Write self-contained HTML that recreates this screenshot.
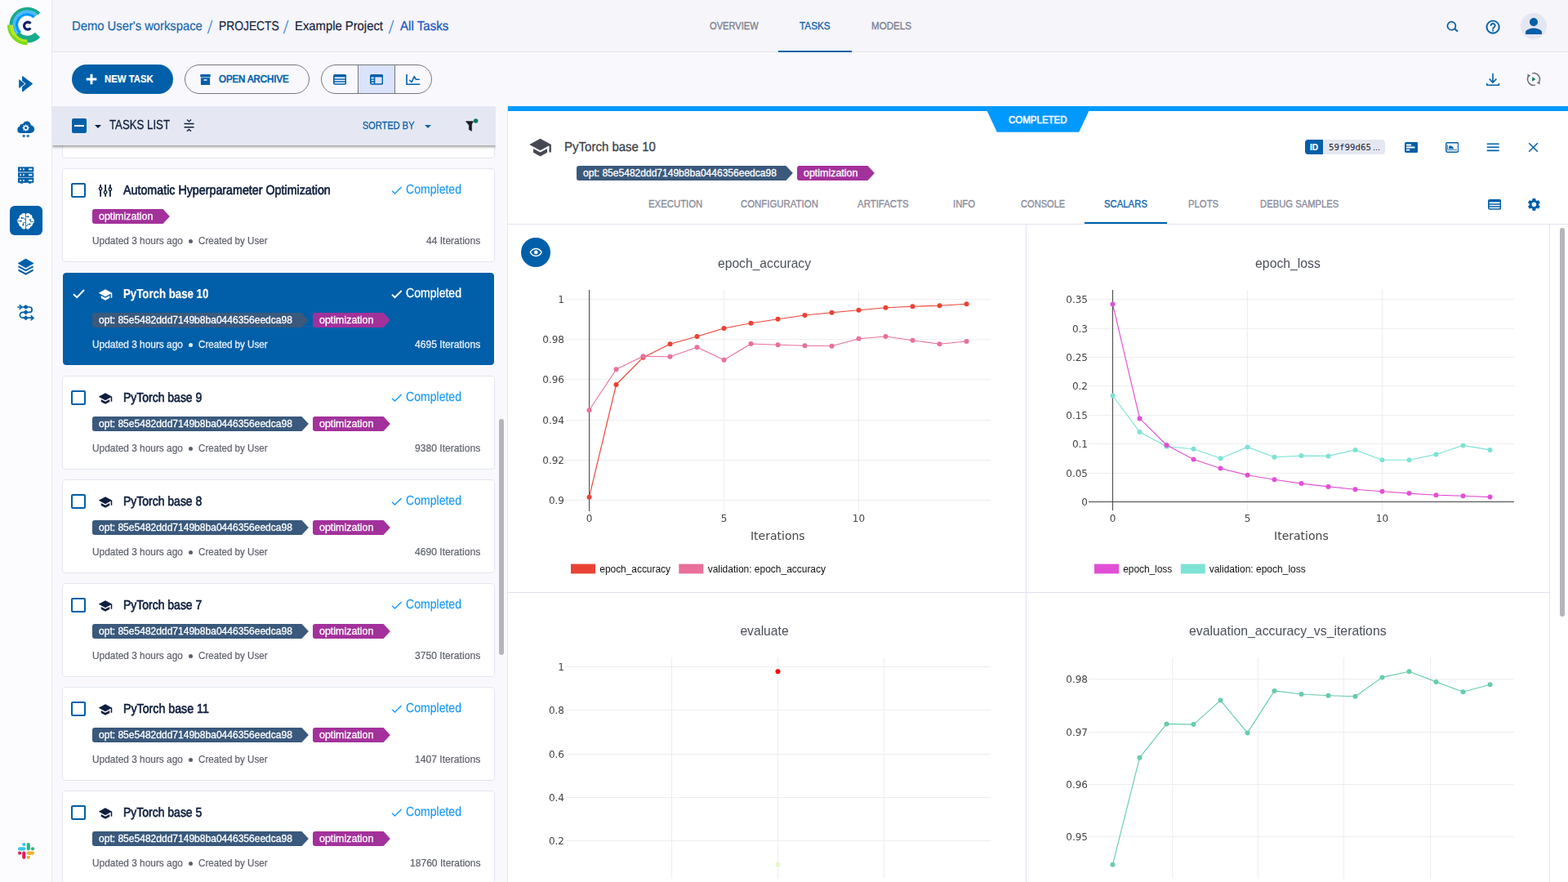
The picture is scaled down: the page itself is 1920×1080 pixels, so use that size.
<!DOCTYPE html>
<html lang="en"><head><meta charset="utf-8"><title>ClearML - Example Project - Tasks</title><style>
*{box-sizing:border-box;margin:0;padding:0}
html,body{width:1920px;height:1080px;overflow:hidden}
body{position:relative;background:#f9f9fd;font-family:"Liberation Sans",sans-serif;color:#0e1e3d}
.abs,.t,svg.i{position:absolute}
.t{white-space:nowrap;line-height:1;font-weight:400;transform-origin:0 50%;-webkit-text-stroke:.18px currentColor}
.m{-webkit-text-stroke:.3px currentColor}
.sb{-webkit-text-stroke:.65px currentColor}
.b{font-weight:700}
.sidebar{position:absolute;left:0;top:0;width:64px;height:1080px;background:#fcfcfe;border-right:1px solid #e6e8f2}
.topbar{position:absolute;left:64px;top:0;width:1856px;height:64px;background:#f5f5fa;border-bottom:1px solid #e3e5ef}
.navline{position:absolute;left:889px;top:62px;width:90px;height:2px;background:#005fa8}
.btn{position:absolute;top:79px;height:36px;border-radius:18px}
.btn.primary{left:88px;width:124px;background:#005fa8}
.btn.outline{left:226px;width:153px;border:1px solid #74777f}
.toggle{position:absolute;left:393px;top:79px;width:136px;height:36px;border-radius:18px;border:1px solid #74777f;overflow:hidden}
.toggle i{position:absolute;top:0;height:34px;display:block}
.list{position:absolute;left:64px;top:130px;width:558px;height:950px;border-right:1px solid #e3e5ef;overflow:hidden}
.lhwrap{position:absolute;left:0;top:0;width:543px;height:58px;overflow:hidden;z-index:3}
.listhead{position:absolute;left:0;top:0;width:543px;height:48px;background:#e5e8f2;box-shadow:0 2px 3px rgba(0,0,0,.38)}
.card{position:absolute;left:12px;width:530px;height:115px;background:#fff;border:1px solid #e3e6f0;border-radius:4px}
.card.sel{background:#005fa8;border-color:rgba(255,255,255,.55);background-clip:padding-box;border-radius:5px}
.cb{position:absolute;left:10px;top:17px;width:18px;height:18px;border:2px solid #005fa8;border-radius:2px;background:#fff}
.tag{position:absolute;height:18px;top:49px}
.tag b{position:absolute;left:0;top:0;height:18px;border-radius:3px 0 0 3px;display:block}
.thumb{position:absolute;background:#b5b5bb;border-radius:3px}
.detail{position:absolute;left:622px;top:130px;width:1298px;height:950px;background:#fff;overflow:hidden}
.detail .bar{position:absolute;left:0;top:0;width:1298px;height:6px;background:#0099ff}
.card,figure svg,.listhead{will-change:transform}
.hl{position:absolute;height:1px;background:#e1e3ee}
.vl{position:absolute;width:1px;background:#e1e3ee}
.idb{position:absolute;left:976px;top:41px;width:98px;height:18px;border-radius:4px;background:#e4e7f1;overflow:hidden}
.idb b{position:absolute;left:0;top:0;width:22px;height:18px;background:#005fa8;display:block}
.eye{position:absolute;left:16px;top:161px;width:36px;height:36px;border-radius:18px;background:#005fa8}
.tabline{position:absolute;left:706px;top:142px;width:101px;height:2px;background:#005fa8}
</style></head><body><aside class="sidebar"><svg class="i" style="left:0px;top:0px" width="64" height="64" viewBox="0 0 64 64"><path d="M13.61 31.29A19.9 19.9 0 0 1 47.81 16.78" fill="none" stroke="#16ab8b" stroke-width="4"></path><path d="M46.02 42.69A17.4 17.4 0 0 1 20.17 41.78" fill="none" stroke="#16ab8b" stroke-width="8.6"></path><path d="M21.01 41.08A16.3 16.3 0 0 1 44.82 18.87" fill="none" stroke="#4db8ff" stroke-width="3.4"></path><path d="M24.87 40.19A12.9 12.9 0 0 1 41.96 20.86" fill="none" stroke="#0099ff" stroke-width="3.4"></path><path d="M33.50 50.30A19.7 19.7 0 0 1 13.80 30.60" fill="none" stroke="#b2ea19" stroke-width="3.4"></path><path d="M33.50 53.60A23 23 0 0 1 10.50 30.60" fill="none" stroke="#7ddb1c" stroke-width="3.3"></path><path d="M37.45 34.49A4.5 4.5 0 1 1 37.45 28.71" fill="none" stroke="#0b1f6e" stroke-width="3.1"></path></svg><svg class="i" style="left:16px;top:86px" width="32" height="32" viewBox="16 86 32 32"><path d="M27.5 93.4L39.7 102.6L27.5 112.2Z" fill="#005fa8" stroke="#005fa8" stroke-width="0.9" stroke-linejoin="round"></path><path d="M23.6 97.7L30 102.6L23.6 107.5Z" fill="#005fa8" stroke="#fcfcfe" stroke-width="2.3" stroke-linejoin="round"></path><path d="M23.6 97.7L30 102.6L23.6 107.5Z" fill="#005fa8" stroke="#005fa8" stroke-width="0.8" stroke-linejoin="round"></path></svg><svg class="i" style="left:16px;top:142px" width="32" height="32" viewBox="16 142 32 32"><g fill="#005fa8"><circle cx="25.4" cy="158.9" r="4.1"></circle><circle cx="27.5" cy="155" r="3.3"></circle><circle cx="32.8" cy="153.7" r="5.1"></circle><circle cx="37.2" cy="158.1" r="4.9"></circle><rect x="25.4" y="156" width="11.8" height="7"></rect></g><polygon points="31.60,152.10 32.71,153.92 34.78,153.42 34.28,155.49 36.10,156.60 34.28,157.71 34.78,159.78 32.71,159.28 31.60,161.10 30.49,159.28 28.42,159.78 28.92,157.71 27.10,156.60 28.92,155.49 28.42,153.42 30.49,153.92" fill="#fff"></polygon><circle cx="31.6" cy="156.6" r="1.6" fill="#005fa8"></circle><path d="M29.2 164.2L30.0 165.7L31.5 166.5L30.0 167.3L29.2 168.8L28.4 167.3L26.9 166.5L28.4 165.7Z" fill="#005fa8"></path><path d="M34.2 164.2L35.0 165.7L36.5 166.5L35.0 167.3L34.2 168.8L33.400000000000006 167.3L31.900000000000002 166.5L33.400000000000006 165.7Z" fill="#005fa8"></path></svg><svg class="i" style="left:16px;top:198px" width="32" height="32" viewBox="16 198 32 32"><rect x="22" y="204.6" width="19.2" height="19.2" rx="0.8" fill="#7ea7cc"></rect><rect x="22" y="204.6" width="19.2" height="5.4" rx="0.6" fill="#005fa8"></rect><rect x="24.3" y="206.39999999999998" width="1.8" height="1.8" fill="#fff"></rect><rect x="28" y="206.39999999999998" width="1.8" height="1.8" fill="#fff"></rect><rect x="35" y="206.39999999999998" width="4.4" height="1.8" fill="#fff"></rect><rect x="22" y="211.7" width="19.2" height="5" rx="0.6" fill="#005fa8"></rect><rect x="24.3" y="213.29999999999998" width="1.8" height="1.8" fill="#fff"></rect><rect x="28" y="213.29999999999998" width="1.8" height="1.8" fill="#fff"></rect><rect x="35" y="213.29999999999998" width="4.4" height="1.8" fill="#fff"></rect><rect x="22" y="218" width="19.2" height="5.8" rx="0.6" fill="#005fa8"></rect><rect x="24.3" y="220.0" width="1.8" height="1.8" fill="#fff"></rect><rect x="28" y="220.0" width="1.8" height="1.8" fill="#fff"></rect><rect x="35" y="220.0" width="4.4" height="1.8" fill="#fff"></rect><rect x="25" y="223.4" width="3.2" height="1.4" rx="0.5" fill="#005fa8"></rect><rect x="35" y="223.4" width="3.2" height="1.4" rx="0.5" fill="#005fa8"></rect></svg><div class="abs" style="left:12px;top:252px;width:40px;height:36px;border-radius:6px;background:#005fa8"></div><svg class="i" style="left:16px;top:254px" width="32" height="32" viewBox="16 254 32 32"><path d="M31.2 262.2C30.3 260.8 27.4 260.6 26.5 262.6C24.5 262.9 23.4 264.6 23.8 266.4C22.1 267.4 20.9 269.3 21.3 270.6C21.1 272 21.9 273.4 23.2 274C23 276 24.3 277.4 25.9 277.7C26.4 279.8 28.3 280.9 30 280.5C30.6 280.4 31.2 279.9 31.2 279.2Z" fill="#fff"></path><path d="M32 262.2C32.9 260.8 35.8 260.6 36.7 262.6C38.7 262.9 39.8 264.6 39.4 266.4C41.1 267.4 42.3 269.3 41.9 270.6C42.1 272 41.3 273.4 40 274C40.2 276 38.9 277.4 37.3 277.7C36.8 279.8 34.9 280.9 33.2 280.5C32.6 280.4 32 279.9 32 279.2Z" fill="#fff"></path><g fill="none" stroke="#005fa8" stroke-width="0.8"><path d="M26.6 266.9H29.2L30 268.6H31.2"></path><path d="M21.6 270.7H25.5"></path><path d="M31.2 272.6H28.6L28.2 275.2"></path><path d="M32 265.3H34.2"></path><path d="M37.2 269.4V271.6H41"></path><path d="M32 276.6H33.3L33.9 274.5H36.2"></path></g><circle cx="26.7" cy="266.9" r="1.05" fill="#005fa8"></circle><circle cx="25.6" cy="270.7" r="1.05" fill="#005fa8"></circle><circle cx="28.3" cy="275.4" r="1.05" fill="#005fa8"></circle><circle cx="34.5" cy="265.2" r="1.05" fill="#005fa8"></circle><circle cx="37.1" cy="269.3" r="1.05" fill="#005fa8"></circle><circle cx="36.5" cy="274.5" r="1.05" fill="#005fa8"></circle></svg><svg class="i" style="left:16px;top:311px" width="32" height="32" viewBox="16 311 32 32"><path d="M31.6 316.9L41.2 322.5L31.6 327.9L22 322.5Z" fill="#005fa8" stroke="#005fa8" stroke-width="0.6" stroke-linejoin="round"></path><path d="M23.3 326.6L31.6 331.2L39.9 326.6" fill="none" stroke="#005fa8" stroke-width="2.1" stroke-linecap="round" stroke-linejoin="round"></path><path d="M23.3 331L31.6 335.6L39.9 331" fill="none" stroke="#005fa8" stroke-width="2.1" stroke-linecap="round" stroke-linejoin="round"></path></svg><svg class="i" style="left:16px;top:367px" width="32" height="32" viewBox="16 367 32 32"><path d="M22 376H36A3.2 3.2 0 0 1 36 382.4H27.8A3.3 3.3 0 0 0 27.8 389.2H40.5" fill="none" stroke="#005fa8" stroke-width="1.7" stroke-linecap="round"></path><path d="M24.2 373.6L26.8 376L24.2 378.4" fill="none" stroke="#005fa8" stroke-width="1.5" stroke-linecap="round" stroke-linejoin="round"></path><path d="M38.2 386.9L40.9 389.3L38.2 391.7" fill="none" stroke="#005fa8" stroke-width="1.7" stroke-linecap="round" stroke-linejoin="round"></path><circle cx="31.6" cy="376" r="2.4" fill="#005fa8"></circle><path d="M31.6 379.6L34.4 382.4L31.6 385.2L28.8 382.4Z" fill="#005fa8" stroke="#005fa8" stroke-width="0.6" stroke-linejoin="round"></path><path d="M31.6 386.5L34.4 389.3L31.6 392.1L28.8 389.3Z" fill="#005fa8" stroke="#005fa8" stroke-width="0.6" stroke-linejoin="round"></path></svg><svg class="i" style="left:16px;top:1026px" width="32" height="32" viewBox="16 1026 32 32"><rect x="27.2" y="1032" width="4.2" height="4.2" rx="2.1" fill="#36c5f0"></rect><rect x="22" y="1037.2" width="9.4" height="4.2" rx="2.1" fill="#36c5f0"></rect><rect x="32.7" y="1032" width="4.2" height="9.4" rx="2.1" fill="#2eb67d"></rect><rect x="37.9" y="1037.2" width="4.2" height="4.2" rx="2.1" fill="#2eb67d"></rect><rect x="32.7" y="1042.5" width="9.4" height="4.2" rx="2.1" fill="#ecb22e"></rect><rect x="32.7" y="1047.7" width="4.2" height="4.2" rx="2.1" fill="#ecb22e"></rect><rect x="27.2" y="1042.5" width="4.2" height="9.4" rx="2.1" fill="#e01e5a"></rect><rect x="22" y="1042.5" width="4.2" height="4.2" rx="2.1" fill="#e01e5a"></rect></svg></aside><header class="topbar"><nav><span class="t u" style="left: 24.28px; top: 23px; font-size: 16px; line-height: 17px; color: rgb(21, 101, 174); transform: scaleX(0.9245) skewX(0.05deg);">Demo User's workspace</span><span class="t" style="left:191.30px;top:24px;font-size:15px;line-height:17px;color:#2f7fd2;transform:skewX(-8.5deg) scaleY(1.5);transform-origin:50% 50%;-webkit-text-stroke:0;">/</span><span class="t u" style="left: 203.84px; top: 23px; font-size: 16px; line-height: 17px; color: rgb(20, 30, 60); transform: scaleX(0.8641) skewX(0.05deg);">PROJECTS</span><span class="t" style="left:284.00px;top:24px;font-size:15px;line-height:17px;color:#2f7fd2;transform:skewX(-8.5deg) scaleY(1.5);transform-origin:50% 50%;-webkit-text-stroke:0;">/</span><span class="t u" style="left: 296.77px; top: 23px; font-size: 16px; line-height: 17px; color: rgb(20, 30, 60); transform: scaleX(0.9263) skewX(0.05deg);">Example Project</span><span class="t" style="left:412.70px;top:24px;font-size:15px;line-height:17px;color:#2f7fd2;transform:skewX(-8.5deg) scaleY(1.5);transform-origin:50% 50%;-webkit-text-stroke:0;">/</span><span class="t m u" style="left: 426px; top: 23px; font-size: 16px; line-height: 17px; color: rgb(28, 88, 196); transform: scaleX(0.9457) skewX(0.05deg);">All Tasks</span></nav><nav><span class="t m" style="left: 804.7px; top: 25px; font-size: 12.4px; line-height: 14px; color: rgb(122, 126, 141); transform: scaleX(0.8974);">OVERVIEW</span><span class="t m" style="left: 915.3px; top: 25px; font-size: 12.4px; line-height: 14px; color: rgb(15, 95, 168); transform: scaleX(0.9482);">TASKS</span><span class="t m" style="left: 1002.66px; top: 25px; font-size: 12.4px; line-height: 14px; color: rgb(122, 126, 141); transform: scaleX(0.9361);">MODELS</span><div class="navline"></div></nav><svg class="i" style="left:1706px;top:24px" width="18" height="18" viewBox="0 0 18 18"><circle cx="7.4" cy="7.7" r="5" fill="none" stroke="#005fa8" stroke-width="1.7"></circle><path d="M11.1 11.3L15 14.5" stroke="#005fa8" stroke-width="2" fill="none"></path></svg><svg class="i" style="left:1753.90px;top:22.60px" width="20.2" height="20.2" viewBox="0 0 24 24"><path d="M11 18h2v-2h-2v2zm1-16C6.48 2 2 6.48 2 12s4.48 10 10 10 10-4.48 10-10S17.52 2 12 2zm0 18c-4.41 0-8-3.59-8-8s3.59-8 8-8 8 3.59 8 8-3.59 8-8 8zm0-14c-2.21 0-4 1.79-4 4h2c0-1.1.9-2 2-2s2 .9 2 2c0 2-3 1.75-3 5h2c0-2.25 3-2.5 3-5 0-2.21-1.79-4-4-4z" fill="#005fa8" stroke="#005fa8" stroke-width="0.3"></path></svg><div class="abs" style="left:1798px;top:16px;width:32px;height:32px;border-radius:16px;background:#e4e6f1"></div><svg class="i" style="left:1799.00px;top:16.60px" width="30" height="30" viewBox="0 0 24 24"><path d="M12 12c2.21 0 4-1.79 4-4s-1.79-4-4-4-4 1.79-4 4 1.79 4 4 4zm0 2c-2.67 0-8 1.34-8 4v2h16v-2c0-2.66-5.33-4-8-4z" fill="#005fa8"></path></svg></header><main><div class="toolbar"><div class="btn primary"><svg class="i" style="left:17px;top:11.4px" width="14" height="14" viewBox="0 0 14 14"><path d="M7 0.7V13.3M0.7 7H13.3" stroke="#fff" stroke-width="2.9" fill="none"></path></svg><span class="t b" style="left: 40px; top: 11px; font-size: 12px; line-height: 14px; color: rgb(255, 255, 255); transform: scaleX(0.9458);">NEW TASK</span></div><div class="btn outline"><svg class="i" style="left:17.8px;top:10.5px" width="13" height="13.4" viewBox="0 0 13 13.4"><rect x="0.2" y="0" width="12.6" height="3.4" rx="1" fill="#005fa8"></rect><path d="M0.9 4.3H12.1V11.9A1.3 1.3 0 0 1 10.8 13.2H2.2A1.3 1.3 0 0 1 0.9 11.9Z" fill="#005fa8"></path><rect x="4.3" y="6.2" width="4.4" height="1.6" rx="0.8" fill="#f9f9fd"></rect></svg><span class="t m sb" style="left: 40.7px; top: 10px; font-size: 12px; line-height: 14px; color: rgb(0, 95, 168); transform: scaleX(0.9517);">OPEN ARCHIVE</span></div><div class="toggle"><i style="left:0;width:45px;border-right:1px solid #74777f"></i><i style="left:45px;width:45px;background:#dbe3fb;border-right:1px solid #74777f"></i><svg class="i" style="left:13.8px;top:11px" width="16.2" height="12.8" viewBox="0 0 16.2 12.8"><rect x="0.8" y="0.8" width="14.6" height="11.2" rx="1.4" fill="none" stroke="#005fa8" stroke-width="1.6"></rect><rect x="0.8" y="0.8" width="14.6" height="2.6" fill="#005fa8"></rect><path d="M1 6.1H15.2M1 9H15.2" stroke="#005fa8" stroke-width="1.5"></path></svg><svg class="i" style="left:58.8px;top:11px" width="16.2" height="12.8" viewBox="0 0 16.2 12.8"><rect x="0.8" y="0.8" width="14.6" height="11.2" rx="1.4" fill="none" stroke="#005fa8" stroke-width="1.6"></rect><rect x="0.8" y="0.8" width="14.6" height="2.6" fill="#005fa8"></rect><path d="M5.6 3V12" stroke="#005fa8" stroke-width="1.5"></path><path d="M1 6.1H5.6M1 9H5.6" stroke="#005fa8" stroke-width="1.4"></path></svg><svg class="i" style="left:103px;top:10.8px" width="17.6" height="13.4" viewBox="0 0 17.6 13.4"><path d="M1 0.4V12.4H16.6" fill="none" stroke="#005fa8" stroke-width="1.6" stroke-linecap="round" stroke-linejoin="round"></path><path d="M4.6 7.2L7 9.6L10.3 2.6L12.2 6.2H16.2" fill="none" stroke="#005fa8" stroke-width="1.5" stroke-linecap="round" stroke-linejoin="round"></path></svg></div><svg class="i" style="left:1819.1px;top:89px" width="18" height="17" viewBox="0 0 18 17"><path d="M9 0.8V11.6M4.6 7.5L9 12L13.4 7.5" fill="none" stroke="#005fa8" stroke-width="1.6"></path><path d="M1.65 13V15.15H16.35V13" fill="none" stroke="#005fa8" stroke-width="1.5" stroke-linejoin="round"></path></svg><svg class="i" style="left:1867.9px;top:87px" width="20" height="20" viewBox="0 0 20 20"><path d="M8.08 2.85A7.4 7.4 0 0 1 16.06 14.24" fill="none" stroke="#6c707c" stroke-width="1.5"></path><path d="M11.92 17.15A7.4 7.4 0 0 1 3.94 5.76" fill="none" stroke="#6c707c" stroke-width="1.5"></path><path d="M13.6 14.6L17.7 16.6L17.3 12.4Z" fill="#6c707c"></path><path d="M6.4 5.4L2.3 3.4L2.7 7.6Z" fill="#6c707c"></path><path d="M8.2 7.2L12.4 10L8.2 12.8Z" fill="#0b7a5c"></path></svg></div><section class="list"><div class="lhwrap"><div class="listhead"><div class="abs" style="left:24px;top:15px;width:18px;height:18px;border-radius:2px;background:#005fa8"><div class="abs" style="left:3px;top:8px;width:12px;height:2px;background:#fff"></div></div><svg class="i" style="left:51px;top:22px" width="10" height="6" viewBox="0 0 10 6"><path d="M1 1H9L5 5Z" fill="#0e1e3d"></path></svg><h2><span class="t m u" style="left: 70.3px; top: 14px; font-size: 16px; line-height: 17px; color: rgb(14, 30, 61); transform: scaleX(0.8269) skewX(0.05deg);">TASKS LIST</span></h2><svg class="i" style="left:160.6px;top:16.2px" width="13" height="15.4" viewBox="0 0 13 15.4"><path d="M0.5 5.6H12.5M0.5 9.7H12.5" stroke="#0e1e3d" stroke-width="1.5" fill="none"></path><path d="M4 0.6L6.5 2.9L9 0.6M4 14.8L6.5 12.5L9 14.8" stroke="#0e1e3d" stroke-width="1.4" fill="none"></path></svg><span class="t m" style="left: 379.7px; top: 17px; font-size: 12.4px; line-height: 14px; color: rgb(15, 95, 168); transform: scaleX(0.8901);">SORTED BY</span><svg class="i" style="left:455px;top:22px" width="10" height="6" viewBox="0 0 10 6"><path d="M1 1H9L5 5Z" fill="#0f5fa8"></path></svg><svg class="i" style="left:506.1px;top:14px;overflow:visible" width="16" height="16" viewBox="0 -4 16 16"><path d="M0.3 0.6H9.5L7.6 4.4V12.5L4.3 10.7V5.2Z" fill="#1b1d21" stroke="#1b1d21" stroke-width="0.5" stroke-linejoin="round"></path><circle cx="12.6" cy="0" r="2.8" fill="#0b7a5c" transform="translate(0 0)"></circle></svg></div></div><div class="card" style="top:-51px"></div><article class="card" style="top:76px"><div class="cb"></div><svg class="i" style="left:43.0px;top:19.1px" width="18" height="15" viewBox="0 0 18 15"><path d="M3.1 0V14.8" stroke="#0e1e3d" stroke-width="1.8" fill="none"></path><circle cx="3.1" cy="5.1" r="1.75" fill="#fff" stroke="#0e1e3d" stroke-width="1.4"></circle><path d="M9.1 0V14.8" stroke="#0e1e3d" stroke-width="1.8" fill="none"></path><circle cx="9.1" cy="9.4" r="1.75" fill="#fff" stroke="#0e1e3d" stroke-width="1.4"></circle><path d="M14.9 0V14.8" stroke="#0e1e3d" stroke-width="1.8" fill="none"></path><circle cx="14.9" cy="5.7" r="1.75" fill="#fff" stroke="#0e1e3d" stroke-width="1.4"></circle></svg><h3><span class="t m sb u" style="left: 74.4px; top: 17px; font-size: 16px; line-height: 17px; color: rgb(14, 30, 61); transform: scaleX(0.8919) skewX(0.05deg);">Automatic Hyperparameter Optimization</span></h3><svg class="i" style="left:399.6px;top:18.5px" width="17.6" height="14.1" viewBox="0 0 17.6 14.1"><path d="M3.0 7.8L6.5 11.1L14.6 3.0" fill="none" stroke="#1a9bf5" stroke-width="1.4"></path></svg><span class="t u" style="left: 419.7px; top: 16px; font-size: 16px; line-height: 17px; color: rgb(26, 155, 245); transform: scaleX(0.8787) skewX(0.05deg);">Completed</span><div class="tag" style="left:36px;width:95.4px"><b style="width:86.4px;background:#a3319b"></b><svg class="i" style="left:85.9px;top:0" width="9.5" height="18" viewBox="0 0 9.5 18"><path d="M0 0L0.5 0L8.9 9L0.5 18L0 18Z" fill="#a3319b"></path></svg><span class="t m" style="left: 8px; top: 2px; font-size: 12.4px; line-height: 14px; color: rgb(255, 255, 255); transform: scaleX(1.0042);">optimization</span></div><span class="t" style="left: 35.5px; top: 81px; font-size: 12.4px; line-height: 14px; color: rgb(91, 94, 106); transform: scaleX(0.9582);">Updated 3 hours ago</span><div class="abs" style="left:154px;top:85.6px;width:5.4px;height:5.4px;border-radius:3px;background:#5b5e6a"></div><span class="t" style="left: 165.5px; top: 81px; font-size: 12.4px; line-height: 14px; color: rgb(91, 94, 106); transform: scaleX(0.938);">Created by User</span><span class="t" style="left: 445px; top: 81px; font-size: 12.4px; line-height: 14px; color: rgb(91, 94, 106); transform: scaleX(0.9707);">44 Iterations</span></article><article class="card sel" style="top:203px"><svg class="i" style="left:9.8px;top:18.4px" width="19.0" height="15.2" viewBox="0 0 19.0 15.2"><path d="M3.0 8.2L7.2 12.2L16.0 3.0" fill="none" stroke="#fff" stroke-width="2"></path></svg><svg class="i" style="left:43.00px;top:18.00px" width="18" height="18" viewBox="0 0 24 24"><path d="M5 13.18v4L12 21l7-3.82v-4L12 17l-7-3.82zM12 3L1 9l11 6 9-4.91V17h2V9L12 3z" fill="#fff"></path></svg><h3><span class="t b u" style="left: 73.57px; top: 17px; font-size: 16px; line-height: 17px; color: rgb(255, 255, 255); transform: scaleX(0.8282) skewX(0.05deg);">PyTorch base 10</span></h3><svg class="i" style="left:399.6px;top:18.5px" width="17.6" height="14.1" viewBox="0 0 17.6 14.1"><path d="M3.0 7.8L6.5 11.1L14.6 3.0" fill="none" stroke="#fff" stroke-width="1.9"></path></svg><span class="t m u" style="left: 419.7px; top: 16px; font-size: 16px; line-height: 17px; color: rgb(255, 255, 255); transform: scaleX(0.8787) skewX(0.05deg);">Completed</span><div class="tag" style="left:36px;width:265px"><b style="width:256px;background:#3a597c"></b><svg class="i" style="left:255.5px;top:0" width="9.5" height="18" viewBox="0 0 9.5 18"><path d="M0 0L0.5 0L8.9 9L0.5 18L0 18Z" fill="#3a597c"></path></svg><span class="t m" style="left: 8px; top: 2px; font-size: 12.4px; line-height: 14px; color: rgb(255, 255, 255); transform: scaleX(0.9712);">opt: 85e5482ddd7149b8ba0446356eedca98</span></div><div class="tag" style="left:306px;width:95.4px"><b style="width:86.4px;background:#a3319b"></b><svg class="i" style="left:85.9px;top:0" width="9.5" height="18" viewBox="0 0 9.5 18"><path d="M0 0L0.5 0L8.9 9L0.5 18L0 18Z" fill="#a3319b"></path></svg><span class="t m" style="left: 8px; top: 2px; font-size: 12.4px; line-height: 14px; color: rgb(255, 255, 255); transform: scaleX(1.0042);">optimization</span></div><span class="t m" style="left: 35.5px; top: 81px; font-size: 12.4px; line-height: 14px; color: rgb(230, 239, 250); transform: scaleX(0.9582);">Updated 3 hours ago</span><div class="abs" style="left:154px;top:85.6px;width:5.4px;height:5.4px;border-radius:3px;background:#e6effa"></div><span class="t m" style="left: 165.5px; top: 81px; font-size: 12.4px; line-height: 14px; color: rgb(230, 239, 250); transform: scaleX(0.938);">Created by User</span><span class="t m" style="left: 431px; top: 81px; font-size: 12.4px; line-height: 14px; color: rgb(230, 239, 250); transform: scaleX(0.9783);">4695 Iterations</span></article><article class="card" style="top:330px"><div class="cb"></div><svg class="i" style="left:43.00px;top:18.00px" width="18" height="18" viewBox="0 0 24 24"><path d="M5 13.18v4L12 21l7-3.82v-4L12 17l-7-3.82zM12 3L1 9l11 6 9-4.91V17h2V9L12 3z" fill="#0e1e3d"></path></svg><h3><span class="t m sb u" style="left: 73.53px; top: 17px; font-size: 16px; line-height: 17px; color: rgb(14, 30, 61); transform: scaleX(0.8731) skewX(0.05deg);">PyTorch base 9</span></h3><svg class="i" style="left:399.6px;top:18.5px" width="17.6" height="14.1" viewBox="0 0 17.6 14.1"><path d="M3.0 7.8L6.5 11.1L14.6 3.0" fill="none" stroke="#1a9bf5" stroke-width="1.4"></path></svg><span class="t u" style="left: 419.7px; top: 16px; font-size: 16px; line-height: 17px; color: rgb(26, 155, 245); transform: scaleX(0.8787) skewX(0.05deg);">Completed</span><div class="tag" style="left:36px;width:265px"><b style="width:256px;background:#3a597c"></b><svg class="i" style="left:255.5px;top:0" width="9.5" height="18" viewBox="0 0 9.5 18"><path d="M0 0L0.5 0L8.9 9L0.5 18L0 18Z" fill="#3a597c"></path></svg><span class="t m" style="left: 8px; top: 2px; font-size: 12.4px; line-height: 14px; color: rgb(255, 255, 255); transform: scaleX(0.9712);">opt: 85e5482ddd7149b8ba0446356eedca98</span></div><div class="tag" style="left:306px;width:95.4px"><b style="width:86.4px;background:#a3319b"></b><svg class="i" style="left:85.9px;top:0" width="9.5" height="18" viewBox="0 0 9.5 18"><path d="M0 0L0.5 0L8.9 9L0.5 18L0 18Z" fill="#a3319b"></path></svg><span class="t m" style="left: 8px; top: 2px; font-size: 12.4px; line-height: 14px; color: rgb(255, 255, 255); transform: scaleX(1.0042);">optimization</span></div><span class="t" style="left: 35.5px; top: 81px; font-size: 12.4px; line-height: 14px; color: rgb(91, 94, 106); transform: scaleX(0.9582);">Updated 3 hours ago</span><div class="abs" style="left:154px;top:85.6px;width:5.4px;height:5.4px;border-radius:3px;background:#5b5e6a"></div><span class="t" style="left: 165.5px; top: 81px; font-size: 12.4px; line-height: 14px; color: rgb(91, 94, 106); transform: scaleX(0.938);">Created by User</span><span class="t" style="left: 431px; top: 81px; font-size: 12.4px; line-height: 14px; color: rgb(91, 94, 106); transform: scaleX(0.9783);">9380 Iterations</span></article><article class="card" style="top:457px"><div class="cb"></div><svg class="i" style="left:43.00px;top:18.00px" width="18" height="18" viewBox="0 0 24 24"><path d="M5 13.18v4L12 21l7-3.82v-4L12 17l-7-3.82zM12 3L1 9l11 6 9-4.91V17h2V9L12 3z" fill="#0e1e3d"></path></svg><h3><span class="t m sb u" style="left: 73.53px; top: 17px; font-size: 16px; line-height: 17px; color: rgb(14, 30, 61); transform: scaleX(0.8731) skewX(0.05deg);">PyTorch base 8</span></h3><svg class="i" style="left:399.6px;top:18.5px" width="17.6" height="14.1" viewBox="0 0 17.6 14.1"><path d="M3.0 7.8L6.5 11.1L14.6 3.0" fill="none" stroke="#1a9bf5" stroke-width="1.4"></path></svg><span class="t u" style="left: 419.7px; top: 16px; font-size: 16px; line-height: 17px; color: rgb(26, 155, 245); transform: scaleX(0.8787) skewX(0.05deg);">Completed</span><div class="tag" style="left:36px;width:265px"><b style="width:256px;background:#3a597c"></b><svg class="i" style="left:255.5px;top:0" width="9.5" height="18" viewBox="0 0 9.5 18"><path d="M0 0L0.5 0L8.9 9L0.5 18L0 18Z" fill="#3a597c"></path></svg><span class="t m" style="left: 8px; top: 2px; font-size: 12.4px; line-height: 14px; color: rgb(255, 255, 255); transform: scaleX(0.9712);">opt: 85e5482ddd7149b8ba0446356eedca98</span></div><div class="tag" style="left:306px;width:95.4px"><b style="width:86.4px;background:#a3319b"></b><svg class="i" style="left:85.9px;top:0" width="9.5" height="18" viewBox="0 0 9.5 18"><path d="M0 0L0.5 0L8.9 9L0.5 18L0 18Z" fill="#a3319b"></path></svg><span class="t m" style="left: 8px; top: 2px; font-size: 12.4px; line-height: 14px; color: rgb(255, 255, 255); transform: scaleX(1.0042);">optimization</span></div><span class="t" style="left: 35.5px; top: 81px; font-size: 12.4px; line-height: 14px; color: rgb(91, 94, 106); transform: scaleX(0.9582);">Updated 3 hours ago</span><div class="abs" style="left:154px;top:85.6px;width:5.4px;height:5.4px;border-radius:3px;background:#5b5e6a"></div><span class="t" style="left: 165.5px; top: 81px; font-size: 12.4px; line-height: 14px; color: rgb(91, 94, 106); transform: scaleX(0.938);">Created by User</span><span class="t" style="left: 431px; top: 81px; font-size: 12.4px; line-height: 14px; color: rgb(91, 94, 106); transform: scaleX(0.9783);">4690 Iterations</span></article><article class="card" style="top:584px"><div class="cb"></div><svg class="i" style="left:43.00px;top:18.00px" width="18" height="18" viewBox="0 0 24 24"><path d="M5 13.18v4L12 21l7-3.82v-4L12 17l-7-3.82zM12 3L1 9l11 6 9-4.91V17h2V9L12 3z" fill="#0e1e3d"></path></svg><h3><span class="t m sb u" style="left: 73.53px; top: 17px; font-size: 16px; line-height: 17px; color: rgb(14, 30, 61); transform: scaleX(0.8731) skewX(0.05deg);">PyTorch base 7</span></h3><svg class="i" style="left:399.6px;top:18.5px" width="17.6" height="14.1" viewBox="0 0 17.6 14.1"><path d="M3.0 7.8L6.5 11.1L14.6 3.0" fill="none" stroke="#1a9bf5" stroke-width="1.4"></path></svg><span class="t u" style="left: 419.7px; top: 16px; font-size: 16px; line-height: 17px; color: rgb(26, 155, 245); transform: scaleX(0.8787) skewX(0.05deg);">Completed</span><div class="tag" style="left:36px;width:265px"><b style="width:256px;background:#3a597c"></b><svg class="i" style="left:255.5px;top:0" width="9.5" height="18" viewBox="0 0 9.5 18"><path d="M0 0L0.5 0L8.9 9L0.5 18L0 18Z" fill="#3a597c"></path></svg><span class="t m" style="left: 8px; top: 2px; font-size: 12.4px; line-height: 14px; color: rgb(255, 255, 255); transform: scaleX(0.9712);">opt: 85e5482ddd7149b8ba0446356eedca98</span></div><div class="tag" style="left:306px;width:95.4px"><b style="width:86.4px;background:#a3319b"></b><svg class="i" style="left:85.9px;top:0" width="9.5" height="18" viewBox="0 0 9.5 18"><path d="M0 0L0.5 0L8.9 9L0.5 18L0 18Z" fill="#a3319b"></path></svg><span class="t m" style="left: 8px; top: 2px; font-size: 12.4px; line-height: 14px; color: rgb(255, 255, 255); transform: scaleX(1.0042);">optimization</span></div><span class="t" style="left: 35.5px; top: 81px; font-size: 12.4px; line-height: 14px; color: rgb(91, 94, 106); transform: scaleX(0.9582);">Updated 3 hours ago</span><div class="abs" style="left:154px;top:85.6px;width:5.4px;height:5.4px;border-radius:3px;background:#5b5e6a"></div><span class="t" style="left: 165.5px; top: 81px; font-size: 12.4px; line-height: 14px; color: rgb(91, 94, 106); transform: scaleX(0.938);">Created by User</span><span class="t" style="left: 431px; top: 81px; font-size: 12.4px; line-height: 14px; color: rgb(91, 94, 106); transform: scaleX(0.9783);">3750 Iterations</span></article><article class="card" style="top:711px"><div class="cb"></div><svg class="i" style="left:43.00px;top:18.00px" width="18" height="18" viewBox="0 0 24 24"><path d="M5 13.18v4L12 21l7-3.82v-4L12 17l-7-3.82zM12 3L1 9l11 6 9-4.91V17h2V9L12 3z" fill="#0e1e3d"></path></svg><h3><span class="t m sb u" style="left: 73.51px; top: 17px; font-size: 16px; line-height: 17px; color: rgb(14, 30, 61); transform: scaleX(0.8882) skewX(0.05deg);">PyTorch base 11</span></h3><svg class="i" style="left:399.6px;top:18.5px" width="17.6" height="14.1" viewBox="0 0 17.6 14.1"><path d="M3.0 7.8L6.5 11.1L14.6 3.0" fill="none" stroke="#1a9bf5" stroke-width="1.4"></path></svg><span class="t u" style="left: 419.7px; top: 16px; font-size: 16px; line-height: 17px; color: rgb(26, 155, 245); transform: scaleX(0.8787) skewX(0.05deg);">Completed</span><div class="tag" style="left:36px;width:265px"><b style="width:256px;background:#3a597c"></b><svg class="i" style="left:255.5px;top:0" width="9.5" height="18" viewBox="0 0 9.5 18"><path d="M0 0L0.5 0L8.9 9L0.5 18L0 18Z" fill="#3a597c"></path></svg><span class="t m" style="left: 8px; top: 2px; font-size: 12.4px; line-height: 14px; color: rgb(255, 255, 255); transform: scaleX(0.9712);">opt: 85e5482ddd7149b8ba0446356eedca98</span></div><div class="tag" style="left:306px;width:95.4px"><b style="width:86.4px;background:#a3319b"></b><svg class="i" style="left:85.9px;top:0" width="9.5" height="18" viewBox="0 0 9.5 18"><path d="M0 0L0.5 0L8.9 9L0.5 18L0 18Z" fill="#a3319b"></path></svg><span class="t m" style="left: 8px; top: 2px; font-size: 12.4px; line-height: 14px; color: rgb(255, 255, 255); transform: scaleX(1.0042);">optimization</span></div><span class="t" style="left: 35.5px; top: 81px; font-size: 12.4px; line-height: 14px; color: rgb(91, 94, 106); transform: scaleX(0.9582);">Updated 3 hours ago</span><div class="abs" style="left:154px;top:85.6px;width:5.4px;height:5.4px;border-radius:3px;background:#5b5e6a"></div><span class="t" style="left: 165.5px; top: 81px; font-size: 12.4px; line-height: 14px; color: rgb(91, 94, 106); transform: scaleX(0.938);">Created by User</span><span class="t" style="left: 431px; top: 81px; font-size: 12.4px; line-height: 14px; color: rgb(91, 94, 106); transform: scaleX(0.9783);">1407 Iterations</span></article><article class="card" style="top:838px"><div class="cb"></div><svg class="i" style="left:43.00px;top:18.00px" width="18" height="18" viewBox="0 0 24 24"><path d="M5 13.18v4L12 21l7-3.82v-4L12 17l-7-3.82zM12 3L1 9l11 6 9-4.91V17h2V9L12 3z" fill="#0e1e3d"></path></svg><h3><span class="t m sb u" style="left: 73.53px; top: 17px; font-size: 16px; line-height: 17px; color: rgb(14, 30, 61); transform: scaleX(0.8731) skewX(0.05deg);">PyTorch base 5</span></h3><svg class="i" style="left:399.6px;top:18.5px" width="17.6" height="14.1" viewBox="0 0 17.6 14.1"><path d="M3.0 7.8L6.5 11.1L14.6 3.0" fill="none" stroke="#1a9bf5" stroke-width="1.4"></path></svg><span class="t u" style="left: 419.7px; top: 16px; font-size: 16px; line-height: 17px; color: rgb(26, 155, 245); transform: scaleX(0.8787) skewX(0.05deg);">Completed</span><div class="tag" style="left:36px;width:265px"><b style="width:256px;background:#3a597c"></b><svg class="i" style="left:255.5px;top:0" width="9.5" height="18" viewBox="0 0 9.5 18"><path d="M0 0L0.5 0L8.9 9L0.5 18L0 18Z" fill="#3a597c"></path></svg><span class="t m" style="left: 8px; top: 2px; font-size: 12.4px; line-height: 14px; color: rgb(255, 255, 255); transform: scaleX(0.9712);">opt: 85e5482ddd7149b8ba0446356eedca98</span></div><div class="tag" style="left:306px;width:95.4px"><b style="width:86.4px;background:#a3319b"></b><svg class="i" style="left:85.9px;top:0" width="9.5" height="18" viewBox="0 0 9.5 18"><path d="M0 0L0.5 0L8.9 9L0.5 18L0 18Z" fill="#a3319b"></path></svg><span class="t m" style="left: 8px; top: 2px; font-size: 12.4px; line-height: 14px; color: rgb(255, 255, 255); transform: scaleX(1.0042);">optimization</span></div><span class="t" style="left: 35.5px; top: 81px; font-size: 12.4px; line-height: 14px; color: rgb(91, 94, 106); transform: scaleX(0.9582);">Updated 3 hours ago</span><div class="abs" style="left:154px;top:85.6px;width:5.4px;height:5.4px;border-radius:3px;background:#5b5e6a"></div><span class="t" style="left: 165.5px; top: 81px; font-size: 12.4px; line-height: 14px; color: rgb(91, 94, 106); transform: scaleX(0.938);">Created by User</span><span class="t" style="left: 424.6px; top: 81px; font-size: 12.4px; line-height: 14px; color: rgb(91, 94, 106); transform: scaleX(0.9744);">18760 Iterations</span></article><div class="thumb" style="left:547px;top:383px;width:6px;height:289px"></div></section><section class="detail"><div class="bar"></div><svg class="i" style="left:586px;top:6px" width="126" height="26" viewBox="0 0 126 26"><path d="M0.7 0L125.3 0L113.2 25.7L12.8 25.7Z" fill="#0099ff"></path></svg><span class="t m sb" style="left: 612.9px; top: 10px; font-size: 12.4px; line-height: 14px; color: rgb(244, 248, 255); transform: scaleX(0.9279);">COMPLETED</span><svg class="i" style="left:24.80px;top:36.00px" width="29.1" height="29.1" viewBox="0 0 24 24"><path d="M5 13.18v4L12 21l7-3.82v-4L12 17l-7-3.82zM12 3L1 9l11 6 9-4.91V17h2V9L12 3z" fill="#464953"></path></svg><h1><span class="t m u" style="left: 69.26px; top: 41px; font-size: 16px; line-height: 17px; color: rgb(61, 64, 75); transform: scaleX(0.9384) skewX(0.05deg);">PyTorch base 10</span></h1><div class="abs" style="left:0;top:24px"><div class="tag" style="left:84px;width:265px"><b style="width:256px;background:#3a597c"></b><svg class="i" style="left:255.5px;top:0" width="9.5" height="18" viewBox="0 0 9.5 18"><path d="M0 0L0.5 0L8.9 9L0.5 18L0 18Z" fill="#3a597c"></path></svg><span class="t m" style="left: 8px; top: 2px; font-size: 12.4px; line-height: 14px; color: rgb(255, 255, 255); transform: scaleX(0.9712);">opt: 85e5482ddd7149b8ba0446356eedca98</span></div><div class="tag" style="left:354px;width:95.4px"><b style="width:86.4px;background:#a3319b"></b><svg class="i" style="left:85.9px;top:0" width="9.5" height="18" viewBox="0 0 9.5 18"><path d="M0 0L0.5 0L8.9 9L0.5 18L0 18Z" fill="#a3319b"></path></svg><span class="t m" style="left: 8px; top: 2px; font-size: 12.4px; line-height: 14px; color: rgb(255, 255, 255); transform: scaleX(1.0042);">optimization</span></div></div><div class="idb"><b></b><span class="t b" style="left: 5.9px; top: 3px; font-size: 11px; line-height: 12px; color: rgb(255, 255, 255); transform: scaleX(0.9226);">ID</span><span class="t" style="left: 28.8px; top: 3px; font-size: 11px; line-height: 13px; color: rgb(29, 32, 48); font-family: &quot;DejaVu Sans Mono&quot;, monospace; -webkit-text-stroke: 0px; transform: scaleX(0.9817);">59f99d65</span><span class="t" style="left: 82.77px; top: 3px; font-size: 11.5px; line-height: 12px; color: rgb(29, 32, 48); -webkit-text-stroke: 0px; transform: scaleX(0.9297);">...</span></div><svg class="i" style="left:1097.9px;top:44.1px" width="16.4" height="12.9" viewBox="0 0 16.4 12.9"><rect x="0" y="0" width="16.4" height="12.9" rx="1.9" fill="#005fa8"></rect><path d="M2.7 3.5H7.3M2.7 6.45H11.7M2.7 9.6H5.5" stroke="#fff" stroke-width="1.9" stroke-linecap="round" fill="none"></path></svg><svg class="i" style="left:1148.1px;top:44.1px" width="16.4" height="12.9" viewBox="0 0 16.4 12.9"><rect x="0.75" y="0.75" width="14.9" height="11.4" rx="1.6" fill="none" stroke="#005fa8" stroke-width="1.5"></rect><path d="M4.1 8.3V6L5.7 3.8L7 5.6L8 4.7L10.4 8.3Z" fill="#005fa8"></path><path d="M2.6 3.4V9.5H14" stroke="#005fa8" stroke-width="0.8" fill="none"></path></svg><svg class="i" style="left:1198px;top:45px" width="16.4" height="10.6" viewBox="0 0 16.4 10.6"><path d="M1.3 1.3H15.1M1.3 5.3H15.1M1.3 9.4H15.1" stroke="#005fa8" stroke-width="1.6" stroke-linecap="round" fill="none"></path></svg><svg class="i" style="left:1249.2px;top:44.1px" width="13" height="13" viewBox="0 0 13 13"><path d="M1.2 1.2L11.8 11.8M11.8 1.2L1.2 11.8" stroke="#005fa8" stroke-width="1.5" fill="none"></path></svg><nav><span class="t m" style="left: 171.58px; top: 113px; font-size: 12.4px; line-height: 14px; color: rgb(135, 138, 152); transform: scaleX(0.917);">EXECUTION</span><span class="t m" style="left: 285.3px; top: 113px; font-size: 12.4px; line-height: 14px; color: rgb(135, 138, 152); transform: scaleX(0.9209);">CONFIGURATION</span><span class="t m" style="left: 427.5px; top: 113px; font-size: 12.4px; line-height: 14px; color: rgb(135, 138, 152); transform: scaleX(0.9237);">ARTIFACTS</span><span class="t m" style="left: 544.58px; top: 113px; font-size: 12.4px; line-height: 14px; color: rgb(135, 138, 152); transform: scaleX(0.9151);">INFO</span><span class="t m" style="left: 628.3px; top: 113px; font-size: 12.4px; line-height: 14px; color: rgb(135, 138, 152); transform: scaleX(0.8951);">CONSOLE</span><span class="t m" style="left: 730px; top: 113px; font-size: 12.4px; line-height: 14px; color: rgb(15, 95, 168); transform: scaleX(0.9152);">SCALARS</span><span class="t m" style="left: 833.09px; top: 113px; font-size: 12.4px; line-height: 14px; color: rgb(135, 138, 152); transform: scaleX(0.9146);">PLOTS</span><span class="t m" style="left: 920.59px; top: 113px; font-size: 12.4px; line-height: 14px; color: rgb(135, 138, 152); transform: scaleX(0.9086);">DEBUG SAMPLES</span><div class="tabline"></div></nav><svg class="i" style="left:1200px;top:114px" width="16.2" height="12.8" viewBox="0 0 16.2 12.8"><rect x="0.8" y="0.8" width="14.6" height="11.2" rx="1.4" fill="none" stroke="#005fa8" stroke-width="1.6"></rect><rect x="0.8" y="0.8" width="14.6" height="2.6" fill="#005fa8"></rect><path d="M1 6.1H15.2M1 9H15.2" stroke="#005fa8" stroke-width="1.5"></path></svg><svg class="i" style="left:1246.80px;top:111.00px" width="18.8" height="18.8" viewBox="0 0 24 24"><path d="M19.14 12.94c.04-.3.06-.61.06-.94 0-.32-.02-.64-.07-.94l2.03-1.58c.18-.14.23-.41.12-.61l-1.92-3.32c-.12-.22-.37-.29-.59-.22l-2.39.96c-.5-.38-1.03-.7-1.62-.94l-.36-2.54c-.04-.24-.24-.41-.48-.41h-3.84c-.24 0-.43.17-.47.41l-.36 2.54c-.59.24-1.13.57-1.62.94l-2.39-.96c-.22-.08-.47 0-.59.22L2.74 8.87c-.12.21-.08.47.12.61l2.03 1.58c-.05.3-.09.63-.09.94s.02.64.07.94l-2.03 1.58c-.18.14-.23.41-.12.61l1.92 3.32c.12.22.37.29.59.22l2.39-.96c.5.38 1.03.7 1.62.94l.36 2.54c.05.24.24.41.48.41h3.84c.24 0 .44-.17.47-.41l.36-2.54c.59-.24 1.13-.56 1.62-.94l2.39.96c.22.08.47 0 .59-.22l1.92-3.32c.12-.22.07-.47-.12-.61l-2.01-1.58zM12 15.6c-1.98 0-3.6-1.62-3.6-3.6s1.62-3.6 3.6-3.6 3.6 1.62 3.6 3.6-1.62 3.6-3.6 3.6z" fill="#005fa8"></path></svg><div class="hl" style="left:0;top:144px;width:1298px"></div><div class="vl" style="left:634px;top:145px;height:805px"></div><div class="vl" style="left:1275px;top:145px;height:805px"></div><div class="hl" style="left:0;top:595px;width:1276px"></div><div class="thumb" style="left:1288px;top:149px;width:6px;height:476px"></div><figure><svg class="i" style="left:0px;top:145px" width="634" height="450" viewBox="622 275 634 450"><line x1="692" y1="366.5" x2="1213" y2="366.5" stroke="#eeeeee" stroke-width="1" shape-rendering="crispEdges"></line><line x1="692" y1="415.5" x2="1213" y2="415.5" stroke="#eeeeee" stroke-width="1" shape-rendering="crispEdges"></line><line x1="692" y1="464.5" x2="1213" y2="464.5" stroke="#eeeeee" stroke-width="1" shape-rendering="crispEdges"></line><line x1="692" y1="514.5" x2="1213" y2="514.5" stroke="#eeeeee" stroke-width="1" shape-rendering="crispEdges"></line><line x1="692" y1="563.5" x2="1213" y2="563.5" stroke="#eeeeee" stroke-width="1" shape-rendering="crispEdges"></line><line x1="692" y1="612.5" x2="1213" y2="612.5" stroke="#eeeeee" stroke-width="1" shape-rendering="crispEdges"></line><line x1="886.5" y1="355" x2="886.5" y2="625.5" stroke="#eeeeee" stroke-width="1" shape-rendering="crispEdges"></line><line x1="1051.5" y1="355" x2="1051.5" y2="625.5" stroke="#eeeeee" stroke-width="1" shape-rendering="crispEdges"></line><line x1="721.5" y1="355" x2="721.5" y2="625.5" stroke="#444" stroke-width="1" shape-rendering="crispEdges"></line><path d="M721.5 608.7L754.5 471.0L787.5 437.7L820.5 421.3L853.5 412.0L886.5 402.0L919.5 395.7L952.5 390.7L985.5 386.0L1018.5 382.7L1051.5 379.7L1084.5 376.7L1117.5 375.3L1150.5 374.3L1183.5 372.3" fill="none" stroke="#ea4335" stroke-width="1.15" stroke-linejoin="round"></path><circle cx="721.5" cy="608.7" r="3" fill="#ea4335"></circle><circle cx="754.5" cy="471.0" r="3" fill="#ea4335"></circle><circle cx="787.5" cy="437.7" r="3" fill="#ea4335"></circle><circle cx="820.5" cy="421.3" r="3" fill="#ea4335"></circle><circle cx="853.5" cy="412.0" r="3" fill="#ea4335"></circle><circle cx="886.5" cy="402.0" r="3" fill="#ea4335"></circle><circle cx="919.5" cy="395.7" r="3" fill="#ea4335"></circle><circle cx="952.5" cy="390.7" r="3" fill="#ea4335"></circle><circle cx="985.5" cy="386.0" r="3" fill="#ea4335"></circle><circle cx="1018.5" cy="382.7" r="3" fill="#ea4335"></circle><circle cx="1051.5" cy="379.7" r="3" fill="#ea4335"></circle><circle cx="1084.5" cy="376.7" r="3" fill="#ea4335"></circle><circle cx="1117.5" cy="375.3" r="3" fill="#ea4335"></circle><circle cx="1150.5" cy="374.3" r="3" fill="#ea4335"></circle><circle cx="1183.5" cy="372.3" r="3" fill="#ea4335"></circle><path d="M721.5 502.3L754.5 452.3L787.5 436.3L820.5 436.7L853.5 425.3L886.5 440.7L919.5 421.0L952.5 422.3L985.5 423.3L1018.5 423.7L1051.5 414.7L1084.5 412.0L1117.5 416.7L1150.5 421.3L1183.5 418.0" fill="none" stroke="#e8709a" stroke-width="1.15" stroke-linejoin="round"></path><circle cx="721.5" cy="502.3" r="3" fill="#e8709a"></circle><circle cx="754.5" cy="452.3" r="3" fill="#e8709a"></circle><circle cx="787.5" cy="436.3" r="3" fill="#e8709a"></circle><circle cx="820.5" cy="436.7" r="3" fill="#e8709a"></circle><circle cx="853.5" cy="425.3" r="3" fill="#e8709a"></circle><circle cx="886.5" cy="440.7" r="3" fill="#e8709a"></circle><circle cx="919.5" cy="421.0" r="3" fill="#e8709a"></circle><circle cx="952.5" cy="422.3" r="3" fill="#e8709a"></circle><circle cx="985.5" cy="423.3" r="3" fill="#e8709a"></circle><circle cx="1018.5" cy="423.7" r="3" fill="#e8709a"></circle><circle cx="1051.5" cy="414.7" r="3" fill="#e8709a"></circle><circle cx="1084.5" cy="412.0" r="3" fill="#e8709a"></circle><circle cx="1117.5" cy="416.7" r="3" fill="#e8709a"></circle><circle cx="1150.5" cy="421.3" r="3" fill="#e8709a"></circle><circle cx="1183.5" cy="418.0" r="3" fill="#e8709a"></circle><text x="691" y="370.7" text-anchor="end" font-family="&quot;DejaVu Sans&quot;,sans-serif" font-size="12" fill="#444">1</text><text x="691" y="419.7" text-anchor="end" font-family="&quot;DejaVu Sans&quot;,sans-serif" font-size="12" fill="#444">0.98</text><text x="691" y="468.7" text-anchor="end" font-family="&quot;DejaVu Sans&quot;,sans-serif" font-size="12" fill="#444">0.96</text><text x="691" y="518.7" text-anchor="end" font-family="&quot;DejaVu Sans&quot;,sans-serif" font-size="12" fill="#444">0.94</text><text x="691" y="567.7" text-anchor="end" font-family="&quot;DejaVu Sans&quot;,sans-serif" font-size="12" fill="#444">0.92</text><text x="691" y="616.7" text-anchor="end" font-family="&quot;DejaVu Sans&quot;,sans-serif" font-size="12" fill="#444">0.9</text><text x="721.5" y="639.3" text-anchor="middle" font-family="&quot;DejaVu Sans&quot;,sans-serif" font-size="12" fill="#444">0</text><text x="886.5" y="639.3" text-anchor="middle" font-family="&quot;DejaVu Sans&quot;,sans-serif" font-size="12" fill="#444">5</text><text x="1051.5" y="639.3" text-anchor="middle" font-family="&quot;DejaVu Sans&quot;,sans-serif" font-size="12" fill="#444">10</text><text x="952.3" y="660.8" text-anchor="middle" font-family="&quot;DejaVu Sans&quot;,sans-serif" font-size="14" fill="#444">Iterations</text><text x="879.0" y="328" font-family="&quot;Liberation Sans&quot;,sans-serif" font-size="17" fill="#4a4e5a" textLength="114" lengthAdjust="spacingAndGlyphs">epoch_accuracy</text><rect x="699" y="690.6" width="30" height="11.8" fill="#ea4335"></rect><text x="734.3" y="701.0" font-family="&quot;Liberation Sans&quot;,sans-serif" font-size="12" fill="#111" textLength="86.7" lengthAdjust="spacing">epoch_accuracy</text><rect x="831.3" y="690.6" width="30" height="11.8" fill="#e8709a"></rect><text x="866.7" y="701.0" font-family="&quot;Liberation Sans&quot;,sans-serif" font-size="12" fill="#111" textLength="144.3" lengthAdjust="spacing">validation: epoch_accuracy</text></svg></figure><figure><svg class="i" style="left:635px;top:145px" width="640" height="450" viewBox="1257 275 640 450"><line x1="1333" y1="366.5" x2="1854" y2="366.5" stroke="#eeeeee" stroke-width="1" shape-rendering="crispEdges"></line><line x1="1333" y1="402.5" x2="1854" y2="402.5" stroke="#eeeeee" stroke-width="1" shape-rendering="crispEdges"></line><line x1="1333" y1="437.5" x2="1854" y2="437.5" stroke="#eeeeee" stroke-width="1" shape-rendering="crispEdges"></line><line x1="1333" y1="472.5" x2="1854" y2="472.5" stroke="#eeeeee" stroke-width="1" shape-rendering="crispEdges"></line><line x1="1333" y1="508.5" x2="1854" y2="508.5" stroke="#eeeeee" stroke-width="1" shape-rendering="crispEdges"></line><line x1="1333" y1="543.5" x2="1854" y2="543.5" stroke="#eeeeee" stroke-width="1" shape-rendering="crispEdges"></line><line x1="1333" y1="579.5" x2="1854" y2="579.5" stroke="#eeeeee" stroke-width="1" shape-rendering="crispEdges"></line><line x1="1527.5" y1="355" x2="1527.5" y2="624.5" stroke="#eeeeee" stroke-width="1" shape-rendering="crispEdges"></line><line x1="1692.5" y1="355" x2="1692.5" y2="624.5" stroke="#eeeeee" stroke-width="1" shape-rendering="crispEdges"></line><line x1="1333" y1="614.5" x2="1854" y2="614.5" stroke="#444" stroke-width="1" shape-rendering="crispEdges"></line><line x1="1362.5" y1="355" x2="1362.5" y2="624.5" stroke="#444" stroke-width="1" shape-rendering="crispEdges"></line><path d="M1362.5 484.5L1395.5 528.9L1428.5 546.7L1461.5 549.8L1494.5 561.2L1527.5 547.4L1560.5 559.8L1593.5 558.1L1626.5 558.4L1659.5 550.9L1692.5 563.2L1725.5 563.2L1758.5 556.4L1791.5 545.4L1824.5 550.9" fill="none" stroke="#7de3d4" stroke-width="1.15" stroke-linejoin="round"></path><circle cx="1362.5" cy="484.5" r="3" fill="#7de3d4"></circle><circle cx="1395.5" cy="528.9" r="3" fill="#7de3d4"></circle><circle cx="1428.5" cy="546.7" r="3" fill="#7de3d4"></circle><circle cx="1461.5" cy="549.8" r="3" fill="#7de3d4"></circle><circle cx="1494.5" cy="561.2" r="3" fill="#7de3d4"></circle><circle cx="1527.5" cy="547.4" r="3" fill="#7de3d4"></circle><circle cx="1560.5" cy="559.8" r="3" fill="#7de3d4"></circle><circle cx="1593.5" cy="558.1" r="3" fill="#7de3d4"></circle><circle cx="1626.5" cy="558.4" r="3" fill="#7de3d4"></circle><circle cx="1659.5" cy="550.9" r="3" fill="#7de3d4"></circle><circle cx="1692.5" cy="563.2" r="3" fill="#7de3d4"></circle><circle cx="1725.5" cy="563.2" r="3" fill="#7de3d4"></circle><circle cx="1758.5" cy="556.4" r="3" fill="#7de3d4"></circle><circle cx="1791.5" cy="545.4" r="3" fill="#7de3d4"></circle><circle cx="1824.5" cy="550.9" r="3" fill="#7de3d4"></circle><path d="M1362.5 372.4L1395.5 512.4L1428.5 545.0L1461.5 562.5L1494.5 573.5L1527.5 581.8L1560.5 587.3L1593.5 592.1L1626.5 595.9L1659.5 599.3L1692.5 601.7L1725.5 604.1L1758.5 606.2L1791.5 607.2L1824.5 608.6" fill="none" stroke="#e14fd6" stroke-width="1.15" stroke-linejoin="round"></path><circle cx="1362.5" cy="372.4" r="3" fill="#e14fd6"></circle><circle cx="1395.5" cy="512.4" r="3" fill="#e14fd6"></circle><circle cx="1428.5" cy="545.0" r="3" fill="#e14fd6"></circle><circle cx="1461.5" cy="562.5" r="3" fill="#e14fd6"></circle><circle cx="1494.5" cy="573.5" r="3" fill="#e14fd6"></circle><circle cx="1527.5" cy="581.8" r="3" fill="#e14fd6"></circle><circle cx="1560.5" cy="587.3" r="3" fill="#e14fd6"></circle><circle cx="1593.5" cy="592.1" r="3" fill="#e14fd6"></circle><circle cx="1626.5" cy="595.9" r="3" fill="#e14fd6"></circle><circle cx="1659.5" cy="599.3" r="3" fill="#e14fd6"></circle><circle cx="1692.5" cy="601.7" r="3" fill="#e14fd6"></circle><circle cx="1725.5" cy="604.1" r="3" fill="#e14fd6"></circle><circle cx="1758.5" cy="606.2" r="3" fill="#e14fd6"></circle><circle cx="1791.5" cy="607.2" r="3" fill="#e14fd6"></circle><circle cx="1824.5" cy="608.6" r="3" fill="#e14fd6"></circle><text x="1332" y="370.7" text-anchor="end" font-family="&quot;DejaVu Sans&quot;,sans-serif" font-size="12" fill="#444">0.35</text><text x="1332" y="406.7" text-anchor="end" font-family="&quot;DejaVu Sans&quot;,sans-serif" font-size="12" fill="#444">0.3</text><text x="1332" y="441.7" text-anchor="end" font-family="&quot;DejaVu Sans&quot;,sans-serif" font-size="12" fill="#444">0.25</text><text x="1332" y="476.7" text-anchor="end" font-family="&quot;DejaVu Sans&quot;,sans-serif" font-size="12" fill="#444">0.2</text><text x="1332" y="512.7" text-anchor="end" font-family="&quot;DejaVu Sans&quot;,sans-serif" font-size="12" fill="#444">0.15</text><text x="1332" y="547.7" text-anchor="end" font-family="&quot;DejaVu Sans&quot;,sans-serif" font-size="12" fill="#444">0.1</text><text x="1332" y="583.7" text-anchor="end" font-family="&quot;DejaVu Sans&quot;,sans-serif" font-size="12" fill="#444">0.05</text><text x="1332" y="618.7" text-anchor="end" font-family="&quot;DejaVu Sans&quot;,sans-serif" font-size="12" fill="#444">0</text><text x="1362.5" y="639.3" text-anchor="middle" font-family="&quot;DejaVu Sans&quot;,sans-serif" font-size="12" fill="#444">0</text><text x="1527.5" y="639.3" text-anchor="middle" font-family="&quot;DejaVu Sans&quot;,sans-serif" font-size="12" fill="#444">5</text><text x="1692.5" y="639.3" text-anchor="middle" font-family="&quot;DejaVu Sans&quot;,sans-serif" font-size="12" fill="#444">10</text><text x="1593.4" y="660.8" text-anchor="middle" font-family="&quot;DejaVu Sans&quot;,sans-serif" font-size="14" fill="#444">Iterations</text><text x="1537.1" y="328" font-family="&quot;Liberation Sans&quot;,sans-serif" font-size="17" fill="#4a4e5a" textLength="79.8" lengthAdjust="spacingAndGlyphs">epoch_loss</text><rect x="1340" y="690.6" width="30" height="11.8" fill="#e14fd6"></rect><text x="1375.2" y="701.0" font-family="&quot;Liberation Sans&quot;,sans-serif" font-size="12" fill="#111" textLength="60" lengthAdjust="spacing">epoch_loss</text><rect x="1445.8" y="690.6" width="30" height="11.8" fill="#7de3d4"></rect><text x="1480.7" y="701.0" font-family="&quot;Liberation Sans&quot;,sans-serif" font-size="12" fill="#111" textLength="118" lengthAdjust="spacing">validation: epoch_loss</text></svg></figure><figure><svg class="i" style="left:0px;top:596px" width="634" height="354" viewBox="622 726 634 354"><line x1="692" y1="816.5" x2="1213" y2="816.5" stroke="#eeeeee" stroke-width="1" shape-rendering="crispEdges"></line><line x1="692" y1="869.5" x2="1213" y2="869.5" stroke="#eeeeee" stroke-width="1" shape-rendering="crispEdges"></line><line x1="692" y1="923.5" x2="1213" y2="923.5" stroke="#eeeeee" stroke-width="1" shape-rendering="crispEdges"></line><line x1="692" y1="976.5" x2="1213" y2="976.5" stroke="#eeeeee" stroke-width="1" shape-rendering="crispEdges"></line><line x1="692" y1="1029.5" x2="1213" y2="1029.5" stroke="#eeeeee" stroke-width="1" shape-rendering="crispEdges"></line><line x1="822.5" y1="805" x2="822.5" y2="1075.5" stroke="#eeeeee" stroke-width="1" shape-rendering="crispEdges"></line><line x1="952.5" y1="805" x2="952.5" y2="1075.5" stroke="#eeeeee" stroke-width="1" shape-rendering="crispEdges"></line><line x1="1082.5" y1="805" x2="1082.5" y2="1075.5" stroke="#eeeeee" stroke-width="1" shape-rendering="crispEdges"></line><circle cx="952.5" cy="822.3" r="3" fill="#ff0000"></circle><circle cx="952.5" cy="1058.7" r="3" fill="#e3f6cd"></circle><text x="691" y="820.7" text-anchor="end" font-family="&quot;DejaVu Sans&quot;,sans-serif" font-size="12" fill="#444">1</text><text x="691" y="873.7" text-anchor="end" font-family="&quot;DejaVu Sans&quot;,sans-serif" font-size="12" fill="#444">0.8</text><text x="691" y="927.7" text-anchor="end" font-family="&quot;DejaVu Sans&quot;,sans-serif" font-size="12" fill="#444">0.6</text><text x="691" y="980.7" text-anchor="end" font-family="&quot;DejaVu Sans&quot;,sans-serif" font-size="12" fill="#444">0.4</text><text x="691" y="1033.7" text-anchor="end" font-family="&quot;DejaVu Sans&quot;,sans-serif" font-size="12" fill="#444">0.2</text><text x="906.4" y="778" font-family="&quot;Liberation Sans&quot;,sans-serif" font-size="17" fill="#4a4e5a" textLength="59.2" lengthAdjust="spacingAndGlyphs">evaluate</text></svg></figure><figure><svg class="i" style="left:635px;top:596px" width="640" height="354" viewBox="1257 726 640 354"><line x1="1333" y1="831.5" x2="1854" y2="831.5" stroke="#eeeeee" stroke-width="1" shape-rendering="crispEdges"></line><line x1="1333" y1="896.5" x2="1854" y2="896.5" stroke="#eeeeee" stroke-width="1" shape-rendering="crispEdges"></line><line x1="1333" y1="960.5" x2="1854" y2="960.5" stroke="#eeeeee" stroke-width="1" shape-rendering="crispEdges"></line><line x1="1333" y1="1024.5" x2="1854" y2="1024.5" stroke="#eeeeee" stroke-width="1" shape-rendering="crispEdges"></line><line x1="1435.5" y1="805" x2="1435.5" y2="1075.5" stroke="#eeeeee" stroke-width="1" shape-rendering="crispEdges"></line><line x1="1540.5" y1="805" x2="1540.5" y2="1075.5" stroke="#eeeeee" stroke-width="1" shape-rendering="crispEdges"></line><line x1="1645.5" y1="805" x2="1645.5" y2="1075.5" stroke="#eeeeee" stroke-width="1" shape-rendering="crispEdges"></line><line x1="1751.5" y1="805" x2="1751.5" y2="1075.5" stroke="#eeeeee" stroke-width="1" shape-rendering="crispEdges"></line><path d="M1362.5 1058.7L1395.5 927.7L1428.5 886.4L1461.5 887.1L1494.5 857.6L1527.5 897.4L1560.5 845.9L1593.5 850.0L1626.5 851.7L1659.5 852.8L1692.5 829.4L1725.5 822.2L1758.5 834.9L1791.5 847.3L1824.5 838.3" fill="none" stroke="#66cdaa" stroke-width="1.15" stroke-linejoin="round"></path><circle cx="1362.5" cy="1058.7" r="3" fill="#66cdaa"></circle><circle cx="1395.5" cy="927.7" r="3" fill="#66cdaa"></circle><circle cx="1428.5" cy="886.4" r="3" fill="#66cdaa"></circle><circle cx="1461.5" cy="887.1" r="3" fill="#66cdaa"></circle><circle cx="1494.5" cy="857.6" r="3" fill="#66cdaa"></circle><circle cx="1527.5" cy="897.4" r="3" fill="#66cdaa"></circle><circle cx="1560.5" cy="845.9" r="3" fill="#66cdaa"></circle><circle cx="1593.5" cy="850.0" r="3" fill="#66cdaa"></circle><circle cx="1626.5" cy="851.7" r="3" fill="#66cdaa"></circle><circle cx="1659.5" cy="852.8" r="3" fill="#66cdaa"></circle><circle cx="1692.5" cy="829.4" r="3" fill="#66cdaa"></circle><circle cx="1725.5" cy="822.2" r="3" fill="#66cdaa"></circle><circle cx="1758.5" cy="834.9" r="3" fill="#66cdaa"></circle><circle cx="1791.5" cy="847.3" r="3" fill="#66cdaa"></circle><circle cx="1824.5" cy="838.3" r="3" fill="#66cdaa"></circle><text x="1332" y="835.7" text-anchor="end" font-family="&quot;DejaVu Sans&quot;,sans-serif" font-size="12" fill="#444">0.98</text><text x="1332" y="900.7" text-anchor="end" font-family="&quot;DejaVu Sans&quot;,sans-serif" font-size="12" fill="#444">0.97</text><text x="1332" y="964.7" text-anchor="end" font-family="&quot;DejaVu Sans&quot;,sans-serif" font-size="12" fill="#444">0.96</text><text x="1332" y="1028.7" text-anchor="end" font-family="&quot;DejaVu Sans&quot;,sans-serif" font-size="12" fill="#444">0.95</text><text x="1456.0" y="778" font-family="&quot;Liberation Sans&quot;,sans-serif" font-size="17" fill="#4a4e5a" textLength="241.6" lengthAdjust="spacingAndGlyphs">evaluation_accuracy_vs_iterations</text></svg></figure><div class="eye"><svg class="i" style="left:9.5px;top:10.4px" width="16.6" height="16.6" viewBox="0 0 24 24"><path d="M12 6c3.79 0 7.17 2.13 8.82 5.5C19.17 14.87 15.79 17 12 17s-7.17-2.13-8.82-5.5C4.83 8.13 8.21 6 12 6m0-2C7 4 2.73 7.11 1 11.5 2.73 15.89 7 19 12 19s9.27-3.11 11-7.5C21.27 7.11 17 4 12 4z" fill="#fff"></path><circle cx="12" cy="11.5" r="3.4" fill="#fff"></circle></svg></div></section></main></body></html>
